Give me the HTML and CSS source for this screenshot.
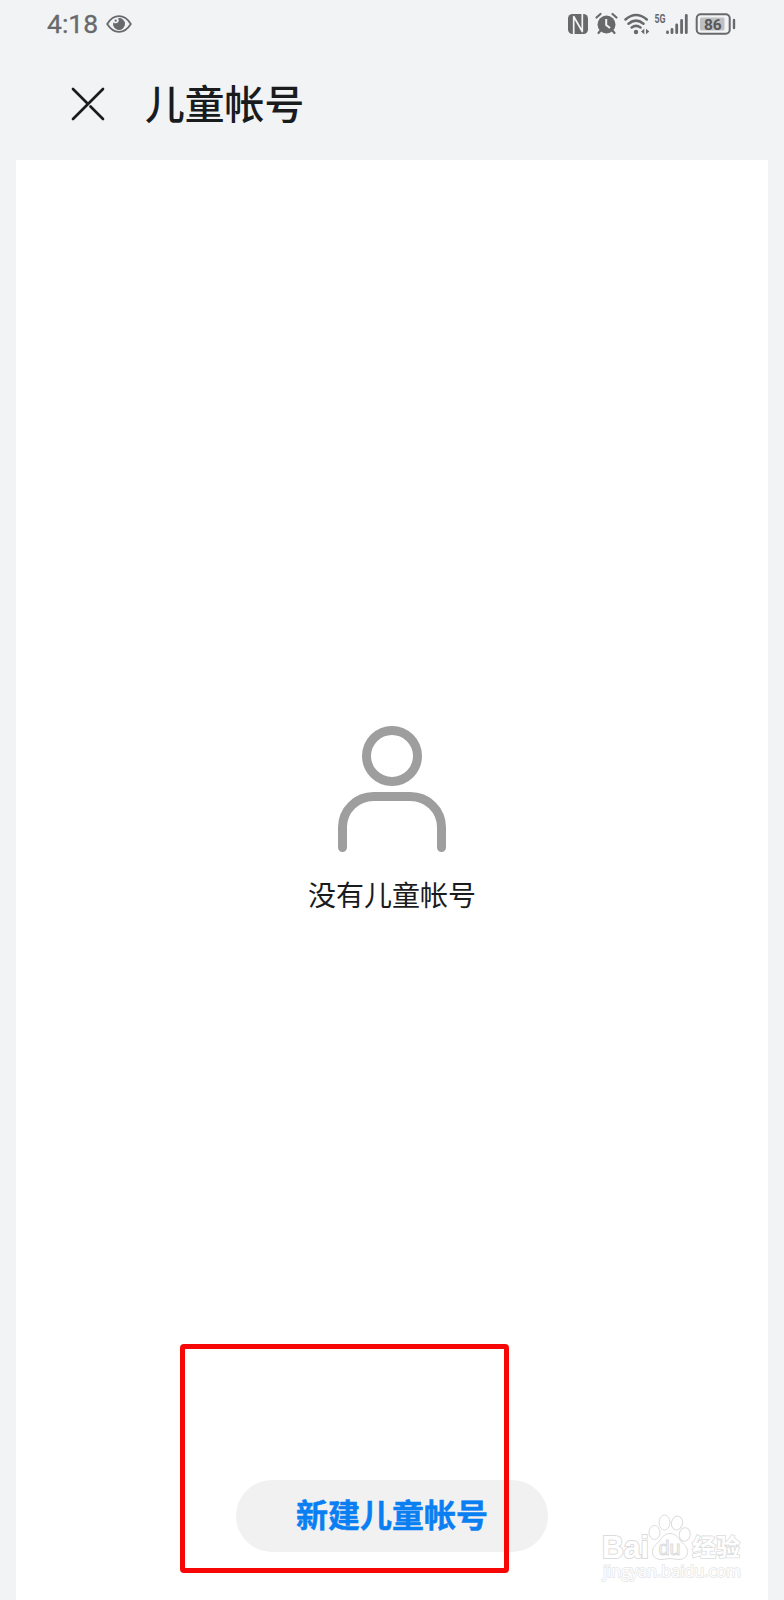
FILE: index.html
```html
<!DOCTYPE html>
<html lang="zh-CN">
<head>
    <meta charset="utf-8">
    <title>儿童帐号</title>
    <link rel="stylesheet" href="styles.css">
</head>
<body>
    <div class="statusbar">
        <span class="time">4:18</span>
        <svg class="eye" width="26" height="18" viewBox="0 0 26 18">
            <path d="M1.2 9Q6 1.2 13 1.2T24.8 9Q20 16.8 13 16.8T1.2 9Z" fill="none" stroke="#67696b" stroke-width="1.8"/>
            <path d="M12.2 3Q13.5 6 11.8 7.6T7.2 7.4A6 6 0 1 0 12.2 3Z" fill="#67696b"/>
            <circle cx="9.7" cy="5.7" r="1.1" fill="#67696b"/>
        </svg>
        <svg class="icons" width="170" height="24" viewBox="0 0 170 24">
            <!-- nfc -->
            <rect x="0" y="2" width="20" height="20" rx="4.5" fill="#67696b"/>
            <path d="M5.7 22V4.5L14.3 19.5V2" fill="none" stroke="#f1f3f5" stroke-width="1.7" stroke-linejoin="round"/>
            <!-- alarm -->
            <circle cx="38.5" cy="12.5" r="9" fill="#67696b"/>
            <path d="M28.5 5.5L32.5 2M48.5 5.5L44.5 2M33 18L30.5 21M44 18L46.5 21" fill="none" stroke="#67696b" stroke-width="2.2" stroke-linecap="round"/>
            <path d="M38.2 7V13L42 16" fill="none" stroke="#f1f3f5" stroke-width="2"/>
            <!-- wifi -->
            <path d="M57.5 7.5Q68 -1.5 78.8 7.5M60.5 11.8Q68 5.5 75.5 11.8M63.7 15.5Q68 12.2 72.5 15.5" fill="none" stroke="#67696b" stroke-width="2.5" stroke-linecap="round"/>
            <circle cx="68" cy="20" r="2.2" fill="#67696b"/>
            <path d="M76.3 16.8V22.2L73 19.5ZM78 16.8V22.2L81.3 19.5Z" fill="#67696b"/>
            <text x="86.5" y="10.8" class="net" textLength="11" lengthAdjust="spacingAndGlyphs">5G</text>
            <!-- signal -->
            <path d="M99.5 20V20.7M104 17.5V20.7M108.7 13V20.7M113.6 8.5V20.7M118.3 3.3V20.7" stroke="#67696b" stroke-width="2.8" stroke-linecap="round"/>
            <!-- battery -->
            <rect x="128.7" y="2.2" width="33" height="19.6" rx="4" fill="none" stroke="#67696b" stroke-width="2"/>
            <rect x="132" y="5.5" width="24.5" height="13" rx="1.5" fill="#bfc0c1"/>
            <text x="144.8" y="17.6" class="level" text-anchor="middle">86</text>
            <path d="M166 8V16" stroke="#67696b" stroke-width="2.4" stroke-linecap="round"/>
        </svg>
    </div>
    <div class="header">
        <svg class="close" width="34" height="34" viewBox="0 0 34 34">
            <path d="M2 2L16 16M32 2L2 32M19.5 19.5L32 32" stroke="#191b1d" stroke-width="2.7" stroke-linecap="round"/>
        </svg>
        <h1>儿童帐号</h1>
    </div>
    <div class="panel">
        <div class="empty">
            <svg width="108" height="126" viewBox="0 0 108 126">
                <g fill="none" stroke="#9e9e9e" stroke-width="9" stroke-linecap="round">
                    <circle cx="54" cy="30" r="25.5"/>
                    <path d="M4.5 121.5V101A31 31 0 0 1 35.5 70.5H72.5A31 31 0 0 1 103.5 101V121.5"/>
                </g>
            </svg>
            <p>没有儿童帐号</p>
        </div>
        <button type="button" class="create">新建儿童帐号</button>
    </div>

    <div class="marker"></div>
    <svg class="watermark" width="150" height="76" viewBox="0 0 150 76">
        <g class="outline">
            <text x="2" y="48" class="logo" textLength="47" lengthAdjust="spacingAndGlyphs">Bai</text>
            <path d="M70 23.5C63 23.5 61 30 56.5 34C49.5 40 52 49.5 61 49.5C65 49.5 67 48.5 70 48.5S75 49.5 79 49.5C88 49.5 90.5 40 83.5 34C79 30 77 23.5 70 23.5Z"/>
            <ellipse cx="54.5" cy="22.5" rx="5.5" ry="7"/>
            <ellipse cx="64.5" cy="12.5" rx="5.5" ry="7.5"/>
            <ellipse cx="77" cy="13" rx="5.5" ry="7" transform="rotate(12 77 13)"/>
            <ellipse cx="84.7" cy="24.5" rx="5.5" ry="6.8" transform="rotate(10 84.7 24.5)"/>
            <text x="58.5" y="45" class="du" textLength="22" lengthAdjust="spacingAndGlyphs">du</text>
            <text x="92" y="46" class="cn">经验</text>
            <text x="3" y="67" class="url" textLength="138" lengthAdjust="spacingAndGlyphs">jingyan.baidu.com</text>
        </g>
    </svg>
</body>
</html>
```
FILE: styles.css
```css
*
{
    box-sizing: border-box;
}
body
{
    position: relative;
    display: flex;
    flex-direction: column;
    margin: 0;
    height: 1600px;
    overflow: hidden;
    background: #f1f3f5;
    color: #191b1d;
    font-family: "Noto Sans CJK SC", sans-serif;
}
.statusbar
{
    display: flex;
    align-items: center;
    height: 48px;
    padding: 0 46px 0 47px;
    color: #67696b;
}
.time
{
    width: 59px;
    font: 26.5px/48px Roboto, sans-serif;
    -webkit-text-stroke: 0.3px #67696b;
}
.icons
{
    margin-left: auto;
}
.net
{
    font: bold 12.5px Roboto, sans-serif;
    fill: #67696b;
}
.level
{
    font: bold 15.5px Roboto, sans-serif;
    fill: #55575a;
}
.header
{
    display: flex;
    align-items: center;
    height: 112px;
    padding-left: 71px;
}
.header h1
{
    margin: 0 0 0 40px;
    padding-bottom: 4px;
    font-size: 39.8px;
    font-weight: 500;
    line-height: 108px;
}
.panel
{
    flex: 1;
    display: flex;
    flex-direction: column;
    align-items: center;
    margin: 0 16px;
    padding-bottom: 48px;
    background: #fff;
}
.empty
{
    display: flex;
    flex-direction: column;
    align-items: center;
    margin-top: 566px;
}
.empty p
{
    margin: 22px 0 0;
    font-size: 28px;
    line-height: 40px;
}
.create
{
    width: 312px;
    height: 72px;
    margin-top: auto;
    padding: 0 0 6px;
    border: 0;
    border-radius: 36px;
    background: #f1f1f1;
    color: #0a7ff2;
    font: bold 32px/66px "Noto Sans CJK SC", sans-serif;
    -webkit-text-stroke: 0.5px #0a7ff2;
}
.marker
{
    position: absolute;
    left: 180px;
    top: 1344px;
    width: 329px;
    height: 229px;
    border: 5px solid #f70606;
    border-radius: 4px;
}
.watermark
{
    position: absolute;
    left: 600px;
    top: 1510px;
}
.outline
{
    fill: #fff;
    stroke: #dcdcdc;
    stroke-width: 1;
}
.logo
{
    font: bold 31px "Liberation Sans", sans-serif;
    stroke-width: 2;
    paint-order: stroke;
}
.du
{
    font: 20px "Liberation Sans", sans-serif;
}
.cn
{
    font: bold 24px "Noto Sans CJK SC", sans-serif;
    stroke-width: 1.6;
    paint-order: stroke;
}
.url
{
    font: 17px "Open Sans", sans-serif;
    stroke: #e6e6e6;
    stroke-width: 1.6;
    paint-order: stroke;
}
```
